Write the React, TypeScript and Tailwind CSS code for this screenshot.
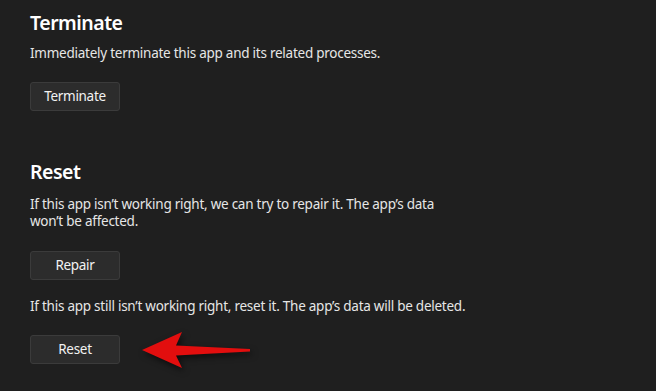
const font = { fontFamily: '"Noto Sans", "Open Sans", sans-serif' }

function ActionButton({ label }: { label: string }) {
  return (
    <button className="flex h-[29px] w-[90px] items-center justify-center rounded-[3px] border border-[#3b3b3b] bg-[#2c2c2c] text-[13.5px] tracking-[-0.3px] text-[#f2f2f2]">
      {label}
    </button>
  )
}

// red annotation arrow pointing at the Reset button
function Arrow() {
  return (
    <svg
      width="120"
      height="50"
      viewBox="0 0 120 50"
      className="absolute left-[110px] top-[-5px] drop-shadow-[2px_3px_3px_rgba(0,0,0,0.6)]"
    >
      <polygon points="2,20 42,2 36,15.5 110,19 110,21.5 36,25.5 42,38" fill="#e20e0e" />
    </svg>
  )
}

export default function App() {
  return (
    <div className="h-[391px] w-[656px] overflow-hidden bg-[#1f1f1f] px-[30px] text-white" style={font}>
      <h2 className="pt-[9px] text-[19.5px] font-semibold leading-[28px] tracking-[-0.5px]">Terminate</h2>
      <p className="mt-[6px] text-[13.5px] leading-[20px] tracking-[-0.25px] text-[#e6e6e6]">
        Immediately terminate this app and its related processes.
      </p>
      <div className="mt-[19px]">
        <ActionButton label="Terminate" />
      </div>

      <h2 className="mt-[47px] text-[19.5px] font-semibold leading-[28px] tracking-[-0.5px]">Reset</h2>
      <p className="mt-[10px] w-[420px] text-[13.5px] leading-[17px] tracking-[-0.25px] text-[#e6e6e6]">
        If this app isn’t working right, we can try to repair it. The app’s data won’t be affected.
      </p>
      <div className="mt-[21px]">
        <ActionButton label="Repair" />
      </div>
      <p className="mt-[16px] text-[13.5px] leading-[20px] tracking-[-0.25px] text-[#e6e6e6]">
        If this app still isn’t working right, reset it. The app’s data will be deleted.
      </p>
      <div className="relative mt-[19px]">
        <ActionButton label="Reset" />
        <Arrow />
      </div>
    </div>
  )
}
